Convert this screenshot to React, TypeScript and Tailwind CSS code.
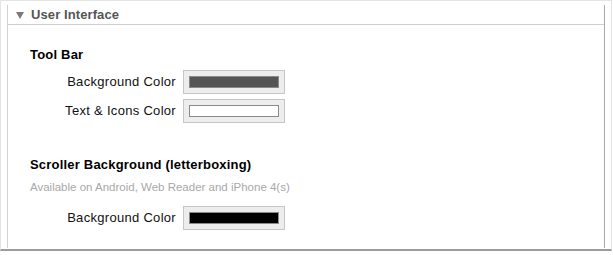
const ROWS_TOOLBAR = [
  { label: 'Background Color', color: '#555555' },
  { label: 'Text & Icons Color', color: '#ffffff' },
];

function ColorWell({ color }: { color: string }) {
  return (
    <div className="w-[102px] h-[24px] p-[5px] bg-[#ededed] border border-[#c6c6c6] flex">
      <div className="flex-1 border border-[#8a8a8a]" style={{ backgroundColor: color }} />
    </div>
  );
}

function ColorRow({ label, color }: { label: string; color: string }) {
  return (
    <div className="flex items-center">
      <span className="w-[168px] text-right text-[13px] tracking-[0.3px] text-[#111]">{label}</span>
      <div className="ml-[7px]">
        <ColorWell color={color} />
      </div>
    </div>
  );
}

export default function App() {
  return (
    <div className="w-[613px] h-[255px] bg-white font-['Liberation_Sans',Arial,sans-serif]">
      <div className="w-[612px] h-[251px] border border-[#e4e4e4] border-b-2 border-b-[#9c9c9c] px-[6px] pt-[4px] pb-[1px]">
        <div className="h-full border-l border-l-[#d2d2d2] border-r border-r-[#a9a9a9]">
          {/* Header */}
          <div className="h-[20px] border-b border-[#cfcfcf] flex items-center pl-[8px]">
            <svg width="8" height="7" viewBox="0 0 8 7" className="mt-[1px]">
              <polygon points="0,0 8,0 4,7" fill="#7a7a7a" />
            </svg>
            <span className="ml-[7px] text-[13px] font-bold tracking-[0.1px] text-[#555]">User Interface</span>
          </div>

          {/* Tool Bar */}
          <div className="pl-[22px] pt-[22px] text-[13px] font-bold tracking-[0.2px] text-black leading-[16px]">
            Tool Bar
          </div>
          <div className="mt-[7px] flex flex-col gap-[5px]">
            {ROWS_TOOLBAR.map((r) => (
              <ColorRow key={r.label} label={r.label} color={r.color} />
            ))}
          </div>

          {/* Scroller */}
          <div className="pl-[22px] pt-[34px] text-[13px] font-bold tracking-[0.2px] text-black leading-[16px]">
            Scroller Background (letterboxing)
          </div>
          <div className="pl-[22px] mt-[7px] text-[11.5px] text-[#a8a8a8] leading-[14px]">
            Available on Android, Web Reader and iPhone 4(s)
          </div>
          <div className="mt-[12px]">
            <ColorRow label="Background Color" color="#000000" />
          </div>
        </div>
      </div>
    </div>
  );
}
